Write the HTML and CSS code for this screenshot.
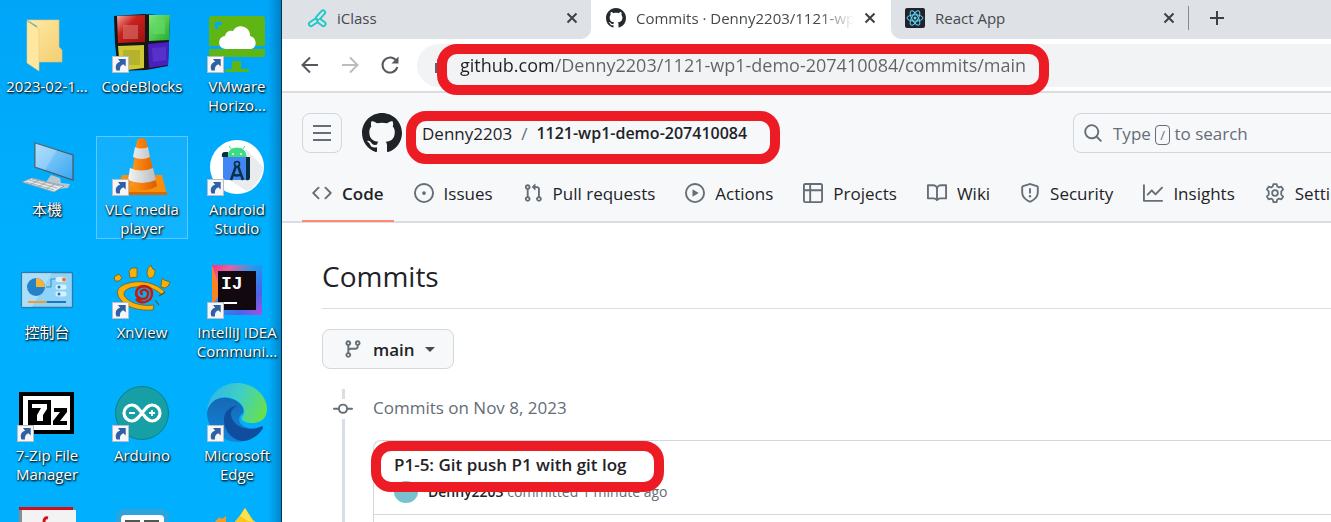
FILE: index.html
```html
<!DOCTYPE html>
<html lang="en">
<head>
<meta charset="utf-8">
<title>Commits · Denny2203/1121-wp1-demo-207410084</title>
<link rel="stylesheet" href="styles.css">
</head>
<body>
<svg width="0" height="0" class="defs" aria-hidden="true">
  <defs>
    <symbol id="badge" viewBox="0 0 17 17"><rect x=".5" y=".5" width="16" height="16" fill="#f5f6f8" stroke="#b9bcc2"/><path d="M4.5 14.500C2.500 9.500 5 6.500 8.200 5.800L6 3h7.700v7.500l-2.300-2.200C8.500 9.500 7.500 11.500 8 14.500z" fill="#2f5fa5"/></symbol>
    <symbol id="octocat" viewBox="0 0 16 16"><path d="M8 0c4.420 0 8 3.580 8 8a8.013 8.013 0 0 1-5.450 7.590c-.4.080-.55-.17-.55-.38 0-.27.010-1.130.010-2.200 0-.75-.25-1.230-.54-1.480 1.780-.2 3.650-.88 3.650-3.950 0-.88-.31-1.590-.82-2.150.080-.2.360-1.020-.080-2.120 0 0-.67-.22-2.200.82-.64-.18-1.320-.27-2-.27-.68 0-1.360.090-2 .27-1.530-1.030-2.200-.82-2.200-.82-.44 1.100-.16 1.920-.080 2.120-.51.560-.82 1.280-.82 2.150 0 3.060 1.860 3.750 3.640 3.950-.23.200-.44.550-.51 1.070-.46.210-1.610.550-2.330-.66-.15-.24-.6-.83-1.230-.82-.67.010-.27.380.010.530.340.190.730.900.820 1.130.160.450.680 1.310 2.690.940 0 .67.010 1.300.010 1.490 0 .21-.15.450-.55.380A7.995 7.995 0 0 1 0 8c0-4.420 3.580-8 8-8Z"/></symbol>
    <linearGradient id="gold" x1="0" y1="0" x2="1" y2="1"><stop offset="0" stop-color="#ffeaa5"/><stop offset="1" stop-color="#f3ce72"/></linearGradient>
    <linearGradient id="red" x1="0" y1="0" x2="1" y2="1"><stop offset="0" stop-color="#f4a8a2"/><stop offset=".4" stop-color="#c9211c"/><stop offset="1" stop-color="#9b1110"/></linearGradient>
    <linearGradient id="green" x1="0" y1="0" x2="1" y2="1"><stop offset="0" stop-color="#7fe77c"/><stop offset="1" stop-color="#25ab2a"/></linearGradient>
    <linearGradient id="cone" x1="0" x2="1"><stop offset="0" stop-color="#ff9a1f"/><stop offset=".5" stop-color="#f47a08"/><stop offset="1" stop-color="#d65c00"/></linearGradient>
    <linearGradient id="conew" x1="0" x2="1"><stop offset="0" stop-color="#f4f4f4"/><stop offset="1" stop-color="#b8bcc0"/></linearGradient>
    <linearGradient id="screen" x1="0" y1="0" x2="1" y2="1"><stop offset="0" stop-color="#9fd8fb"/><stop offset="1" stop-color="#3aa6f2"/></linearGradient>
    <linearGradient id="ij" x1="0" y1="0" x2="1" y2="1"><stop offset="0" stop-color="#fe2d7d"/><stop offset=".2" stop-color="#e8609c"/><stop offset=".45" stop-color="#1f9cf0"/><stop offset=".75" stop-color="#4b64e8"/><stop offset="1" stop-color="#b04ce0"/></linearGradient>
    <linearGradient id="edgetop" x1="0" x2="1" y1=".3" y2=".6"><stop offset="0" stop-color="#31b5ea"/><stop offset=".5" stop-color="#3fcfc4"/><stop offset="1" stop-color="#67e04e"/></linearGradient>
    <linearGradient id="edgemid" x1="0" y1="0" x2="0" y2="1"><stop offset="0" stop-color="#1668b4"/><stop offset="1" stop-color="#1186dc"/></linearGradient>
  </defs>
</svg>

<main class="screen">
<nav class="desktop" aria-label="Desktop">
  <button class="shortcut"><svg viewBox="0 0 58 58"><path d="M9 6h32v27l3 3v12H19V12z" fill="url(#gold)" stroke="#e6c46b" stroke-width=".6"/><path d="M9 7l12 8v42L9 49z" fill="#ffe7a0" stroke="#e9cb7a" stroke-width=".6"/></svg><span>2023-02-1...</span></button>
  <button class="shortcut"><svg viewBox="0 0 58 58"><path d="M1 2l30-2 26 2-2 50-22 4L5 57 2 30z" fill="#161616"/><path d="M4 2l28-1v27L5 29z" fill="url(#red)"/><path d="M10 11h15v14H10z" fill="#d97b76" opacity=".55"/><path d="M36 1h21l-1 25-20 1z" fill="url(#green)"/><path d="M40 6h12v14H40z" fill="#63dd62" opacity=".6"/><path d="M5 32l26-1v23L7 57z" fill="#cdc934"/><path d="M10 36h17v15H10z" fill="#a7a428" opacity=".6"/><path d="M35 30l21-2-1 23-19 3z" fill="#4a1fc0"/><path d="M39 34l14-1v13l-13 2z" fill="#6040cf" opacity=".6"/><use href="#badge" x="-1" y="42" width="17" height="17"/></svg><span>CodeBlocks</span></button>
  <button class="shortcut"><svg viewBox="0 0 58 58"><path d="M4 2h50q3 0 3 3v27H1V5q0-3 3-3z" fill="#5fb513"/><path d="M1 35h56v5q0 3-3 3H4q-3 0-3-3zM24 47h9v8h-9zM19 55h20q2 0 2 3H17q0-3 2-3z" fill="#5fb513"/><path d="M7 15V8h7v3h-4v4z" fill="#00a9fb"/><path d="M18 35c-9 0-9-12-1-13 1-5 5-6 8-5 5-9 18-4 17 5 8 2 7 13 0 13z" fill="#fff"/><use href="#badge" x="-1" y="42" width="17" height="17"/></svg><span>VMware Horizo...</span></button>

  <button class="shortcut"><svg viewBox="0 0 58 58"><path d="M33 38l9 3 1 5 9 1-2 4-11 1-13-4z" fill="#b8c7d0"/><path d="M17 6l38 12v25L17 30z" fill="url(#screen)" stroke="#4d5b66" stroke-width="1.300"/><path d="M17 6l22 7-12 20-10-3z" fill="#fff" opacity=".2"/><path d="M4 45l10-4 32 8-10 6z" fill="#e4e9ec" stroke="#8c989f" stroke-width=".8"/><path d="M8 45l28 8M11 43l28 8M14 42l28 7M12 48l9-5M20 50l9-5M28 52l9-5" stroke="#8c989f" stroke-width=".7"/></svg><span lang="zh-Hant">本機</span></button>
  <button class="shortcut selected"><svg viewBox="0 0 58 58"><path d="M9 38h40l5 20H1z" fill="#f98e0c"/><path d="M1 55h53v3H1z" fill="#d66a00"/><path d="M24 3q5-4 9 0l11 46q-13 8-27 0z" fill="url(#cone)"/><path d="M22 10q6 3 13 0l2 10q-8 4-17 0zM17 31q11 5 23 0l3 12q-14 6-28 0z" fill="url(#conew)"/><use href="#badge" x="-1" y="42" width="17" height="17"/></svg><span>VLC media player</span></button>
  <button class="shortcut"><svg viewBox="0 0 58 58"><circle cx="29" cy="30" r="27" fill="#fff"/><path d="M38 12l17 18q-2 16-16 24L21 43z" fill="#e9ebee"/><path d="M20 20q0-9 9-9t9 9zM21 9l3 4M37 9l-3 4" fill="#3ddc84" stroke="#3ddc84"/><circle cx="25" cy="17" r="1" fill="#fff"/><circle cx="33" cy="17" r="1" fill="#fff"/><path d="M20 15h-3q-4 0-3 5h6zM38 20h4v21q0 3-4 2z" fill="#073042"/><path d="M15 20h23v23H18q-3 0-3-3z" fill="#4285f4"/><circle cx="29" cy="27" r="2.500" fill="none" stroke="#073042" stroke-width="1.600"/><path d="M28 29l-5 14M30 29l5 14M24 37q5 3 10 0" fill="none" stroke="#073042" stroke-width="2.500"/><use href="#badge" x="-1" y="42" width="17" height="17"/></svg><span>Android Studio</span></button>

  <button class="shortcut"><svg viewBox="0 0 58 58"><rect x="3.500" y="12.500" width="51" height="35" rx="1" fill="#8fd3f8" stroke="#2b7ba8" stroke-width="1.300"/><path d="M4 13h30L14 47H4z" fill="#c5eafc" opacity=".5"/><circle cx="18" cy="27" r="9" fill="#2582c8"/><path d="M18 27v-9a9 9 0 0 1 9 9z" fill="#f9b233"/><path d="M28 27h5v-8h7M10 42h19" fill="none" stroke="#3a8abb"/><path d="M10 42h18" stroke="#f39a2c" stroke-width="2"/><path d="M29 42h19" stroke="#1c78bb" stroke-width="2"/><path d="M40 19.500h6M40 27h6M40 34h6" stroke="#d8f1fd" stroke-width="5" stroke-linecap="round"/><circle cx="46" cy="19.500" r="2" fill="#ef7622"/><circle cx="41" cy="27" r="1.500" fill="#1c78bb"/><circle cx="41" cy="34" r="1.500" fill="#1c78bb"/></svg><span lang="zh-Hant">控制台</span></button>
  <button class="shortcut"><svg viewBox="0 0 58 58"><g fill="#f9ae08" stroke="#6d540d" stroke-width=".7"><path d="M1 17l5-3 3 4-3 3-4 0zM16 11l3-3h5v9l-7 1zM34 13q0-5 4-8 1 5 4 5 0 7-4 8-3 1-4-5zM49 18l2 2 6 2q-1 5-5 6l-4-1z"/><path d="M52 32C42 22 27 20 16 23 4 26 2 32 7 39c6 8 17 12 33 11l1-5C28 47 14 42 11 35c-1-6 8-9 18-8 9 0 15 3 20 8z"/><path d="M42 40l4 5M46 36l6-4" stroke-width="1.200"/></g><path d="M30 34q-3 0-2-3 4-3 7 1 1 7-6 7-8-2-5-9c4-6 14-5 15 3 0 9-10 12-16 6" fill="none" stroke="#c41c08" stroke-width="2.600"/><use href="#badge" x="-1" y="42" width="17" height="17"/></svg><span>XnView</span></button>
  <button class="shortcut"><svg viewBox="0 0 58 58"><path d="M4 5h50v50H4z" fill="url(#ij)"/><path d="M4 5l6 18v14L4 45z" fill="#fd8224"/><path d="M10 11h38v39H10z" fill="#120910"/><text x="13" y="29" class="glyph-ij">IJ</text><path d="M15 42h14v2H15z" fill="#fff"/><use href="#badge" x="-1" y="42" width="17" height="17"/></svg><span>IntelliJ IDEA Communi...</span></button>

  <button class="shortcut"><svg viewBox="0 0 58 58"><path d="M1 9h55v42H1z" fill="#000"/><path d="M5 13h47v34H5z" fill="#fff"/><path d="M10 17h23v25H10zM36 25h13v4l-7 9h7v4H35v-4l7-9h-6z" fill="#000"/><path d="M14 21h15v5l-4 6v6h-6v-6l4-7h-9z" fill="#fff"/><use href="#badge" x="-1" y="42" width="17" height="17"/></svg><span>7-Zip File Manager</span></button>
  <button class="shortcut"><svg viewBox="0 0 58 58"><circle cx="29" cy="30" r="26.500" fill="#16a0a5" stroke="#0b7f8a"/><path d="M29 30c-4-5-6-8-10-8a8 8 0 0 0 0 16c4 0 6-3 10-8s6-8 10-8a8 8 0 0 1 0 16c-4 0-6-3-10-8z" fill="none" stroke="#fff" stroke-width="3.200"/><path d="M16 30h6M36 30h6M39 27v6" stroke="#fff" stroke-width="1.800"/><use href="#badge" x="-1" y="42" width="17" height="17"/></svg><span>Arduino</span></button>
  <button class="shortcut"><svg viewBox="0 0 58 58"><path d="M-1 30C-1 18 13 12 24 16c9 3 13 10 11 14-9 6-2 18 17 15C44 57 34 61 22 58 8 54-1 43-1 30z" fill="url(#edgemid)"/><path d="M30 23c-9 0-15 7-14 16 1 10 9 18 18 19 9 0 17-6 21-13 0-2-1-2-3-1-15 6-29-3-29-13 0-4 3-7 7-8z" fill="#104d9e"/><path d="M-1 29C0 12 13 0 29 0c17 0 30 13 30 26 0 10-7 14-15 14-7 0-13-3-9-7 4-7-2-15-12-18C11 11 1 19-1 29z" fill="url(#edgetop)"/><use href="#badge" x="-1" y="42" width="17" height="17"/></svg><span>Microsoft Edge</span></button>

  <button class="shortcut" aria-label="PDF"><svg viewBox="0 0 58 58"><path d="M1 2h54l3 4v52H1z" fill="#8c8c90"/><path d="M4 4h54v54H4z" fill="#f3f3f3"/><path d="M1 1h54v3H1z" fill="#d60d16"/><path d="M30 12q-4-1-4 4v8" fill="none" stroke="#d60d16" stroke-width="3"/></svg></button>
  <button class="shortcut" aria-label="Calculator"><svg viewBox="0 0 58 58"><rect x="3" y="3" width="53" height="55" rx="8" fill="#2ea3dc"/><rect x="8" y="9" width="43" height="49" rx="4" fill="#fff"/><path d="M12 14h15v12H12zM31 14h15v12H31z" fill="#555"/></svg></button>
  <button class="shortcut" aria-label="Flame"><svg viewBox="0 0 58 58"><path d="M4 24q0-7 8-13 1 4 6-1v48H4z" fill="#f79a21"/><path d="M20 22Q30 14 37 2l8 12q8 4 6 20H20z" fill="#fbc91d"/><path d="M32 10l5-8 8 14-5-1z" fill="#fde34b"/></svg></button>
</nav>

<section class="browser">
  <header class="tabstrip">
    <div class="tab tab-first"><svg class="favicon" viewBox="0 0 20 20"><g fill="none" stroke-linecap="round"><path d="M11 10l5-5.500M8.500 13L4 16M12.500 13l4 3" stroke="#1bc8c8" stroke-width="6"/><path d="M11 10l5-5.500M8.500 13L4 16M12.500 13l4 3" stroke="#dee1e6" stroke-width="2.400"/></g><circle cx="10.500" cy="11.800" r="1.300" fill="#1bc8c8"/></svg><span class="tab-title">iClass</span><button class="close" aria-label="Close iClass"><svg viewBox="0 0 12 12"><path d="M1.500 1.500l9 9M10.500 1.500l-9 9"/></svg></button></div>
    <div class="tab tab-active"><svg class="favicon" fill="#24292f"><use href="#octocat"/></svg><span class="tab-title fade">Commits · Denny2203/1121-wp1-demo</span><button class="close" aria-label="Close Commits"><svg viewBox="0 0 12 12"><path d="M1.500 1.500l9 9M10.500 1.500l-9 9"/></svg></button></div>
    <div class="tab-rest">
      <div class="tab tab-react"><svg class="favicon" viewBox="0 0 20 20"><rect width="20" height="20" rx="2" fill="#20232a"/><g fill="none" stroke="#61dafb"><ellipse cx="10" cy="10" rx="8" ry="3.200"/><ellipse cx="10" cy="10" rx="8" ry="3.200" transform="rotate(60 10 10)"/><ellipse cx="10" cy="10" rx="8" ry="3.200" transform="rotate(120 10 10)"/></g><circle cx="10" cy="10" r="1.500" fill="#61dafb"/></svg><span class="tab-title">React App</span><button class="close" aria-label="Close React App"><svg viewBox="0 0 12 12"><path d="M1.500 1.500l9 9M10.500 1.500l-9 9"/></svg></button></div>
      <button class="newtab" aria-label="New tab"><svg viewBox="0 0 16 16"><path d="M8 1v14M1 8h14"/></svg></button>
    </div>
  </header>

  <div class="toolbar">
    <button class="nav" aria-label="Back"><svg viewBox="0 0 20 20"><path d="M18 10H3M10 2.500L2.500 10l7.500 7.500"/></svg></button>
    <button class="nav nav-off" aria-label="Forward" disabled><svg viewBox="0 0 20 20"><path d="M2 10h15M10 2.500l7.500 7.500-7.500 7.500"/></svg></button>
    <button class="nav" aria-label="Reload"><svg viewBox="0 0 20 20"><path d="M16.500 6.200A7.500 7.500 0 1 0 17.300 12"/><path d="M18.500 1.500v7h-7z" fill="#54585d" stroke="none"/></svg></button>
    <div class="omnibox">
      <svg class="lock" viewBox="0 0 14 18"><path d="M1 7h12v10H1z" fill="#5f6368"/><path d="M4 7V4q3-4 6 0v3" fill="none" stroke="#5f6368" stroke-width="2"/></svg>
      <label class="mark mark-url"><input class="url" type="text" aria-label="Address" value="github.com/Denny2203/1121-wp1-demo-207410084/commits/main"></label>
    </div>
  </div>

  <div class="gh-header">
    <div class="gh-top">
      <button class="menu" aria-label="Open menu"><svg viewBox="0 0 20 20"><path d="M1 3h18M1 10h18M1 17h18"/></svg></button>
      <a class="logo" href="#" aria-label="Homepage"><svg><use href="#octocat"/></svg></a>
      <div class="crumb mark mark-crumb"><a href="#">Denny2203</a><span class="slash">/</span><a class="repo" href="#">1121-wp1-demo-207410084</a></div>
      <button class="search"><svg class="icon" viewBox="0 0 16 16"><path d="M10.680 11.740a6 6 0 0 1-7.922-8.982 6 6 0 0 1 8.982 7.922l3.040 3.040a.749.749 0 0 1-1.060 1.060ZM11.500 7a4.499 4.499 0 1 0-8.997 0A4.499 4.499 0 0 0 11.500 7Z"/></svg><span class="hint">Type <kbd>/</kbd> to search</span></button>
    </div>
    <nav class="gh-tabs" aria-label="Repository">
      <a class="current" href="#"><svg class="icon" viewBox="0 0 16 16"><path d="m11.280 3.220 4.250 4.250a.75.75 0 0 1 0 1.060l-4.250 4.250a.749.749 0 0 1-1.060-1.060L13.940 8l-3.720-3.720a.749.749 0 0 1 1.060-1.060Zm-6.560 0a.749.749 0 0 1 1.060 1.060L2.060 8l3.720 3.720a.749.749 0 0 1-1.060 1.060L.47 8.530a.75.75 0 0 1 0-1.060Z"/></svg>Code</a>
      <a href="#"><svg class="icon" viewBox="0 0 16 16"><path d="M8 9.500a1.500 1.500 0 1 0 0-3 1.500 1.500 0 0 0 0 3Z"/><path d="M8 0a8 8 0 1 1 0 16A8 8 0 0 1 8 0ZM1.500 8a6.500 6.500 0 1 0 13 0 6.500 6.500 0 0 0-13 0Z"/></svg>Issues</a>
      <a href="#"><svg class="icon" viewBox="0 0 16 16"><path d="M1.500 3.250a2.250 2.250 0 1 1 3 2.122v5.256a2.251 2.251 0 1 1-1.500 0V5.372A2.250 2.250 0 0 1 1.500 3.250Zm5.677-.177L9.573.677A.25.25 0 0 1 10 .854V2.500h1A2.500 2.500 0 0 1 13.500 5v5.628a2.251 2.251 0 1 1-1.500 0V5a1 1 0 0 0-1-1h-1v1.646a.25.25 0 0 1-.427.177L7.177 3.427a.25.25 0 0 1 0-.354ZM3.750 2.500a.75.75 0 1 0 0 1.500.75.75 0 0 0 0-1.500Zm0 9.500a.75.75 0 1 0 0 1.500.75.75 0 0 0 0-1.500Zm8.250.75a.75.75 0 1 0 1.500 0 .75.75 0 0 0-1.500 0Z"/></svg>Pull requests</a>
      <a href="#"><svg class="icon" viewBox="0 0 16 16"><path d="M8 0a8 8 0 1 1 0 16A8 8 0 0 1 8 0ZM1.500 8a6.500 6.500 0 1 0 13 0 6.500 6.500 0 0 0-13 0Zm4.879-2.773 4.264 2.559a.25.25 0 0 1 0 .428l-4.264 2.559A.25.25 0 0 1 6 10.559V5.442a.25.25 0 0 1 .379-.215Z"/></svg>Actions</a>
      <a href="#"><svg class="icon" viewBox="0 0 16 16"><path d="M0 1.750C0 .784.784 0 1.750 0h12.500C15.216 0 16 .784 16 1.750v12.500A1.750 1.750 0 0 1 14.250 16H1.750A1.750 1.750 0 0 1 0 14.250ZM6.500 6.500v8h7.750a.25.25 0 0 0 .25-.25V6.500Zm8-1.500V1.750a.25.25 0 0 0-.25-.25H6.500V5Zm-13 1.500v7.750c0 .138.112.250.250.250H5v-8ZM5 5V1.500H1.750a.25.25 0 0 0-.25.250V5Z"/></svg>Projects</a>
      <a href="#"><svg class="icon" viewBox="0 0 16 16"><path d="M0 1.750A.75.75 0 0 1 .75 1h4.253c1.227 0 2.317.590 3 1.501A3.743 3.743 0 0 1 11.006 1h4.245a.75.75 0 0 1 .75.750v10.500a.75.75 0 0 1-.75.750h-4.507a2.250 2.250 0 0 0-1.591.659l-.622.621a.75.75 0 0 1-1.060 0l-.622-.621A2.250 2.250 0 0 0 5.258 13H.75a.75.75 0 0 1-.75-.75Zm7.251 10.324.004-5.073-.002-2.253A2.250 2.250 0 0 0 5.003 2.500H1.500v9h3.757a3.750 3.750 0 0 1 1.994.574ZM8.755 4.750l-.004 7.322a3.752 3.752 0 0 1 1.992-.572H14.500v-9h-3.495a2.250 2.250 0 0 0-2.250 2.250Z"/></svg>Wiki</a>
      <a href="#"><svg class="icon" viewBox="0 0 16 16"><path d="M7.467.133a1.748 1.748 0 0 1 1.066 0l5.250 1.680A1.750 1.750 0 0 1 15 3.480V7c0 1.566-.32 3.182-1.303 4.682-.983 1.498-2.585 2.813-5.032 3.855a1.697 1.697 0 0 1-1.330 0c-2.447-1.042-4.049-2.357-5.032-3.855C1.320 10.182 1 8.566 1 7V3.480a1.750 1.750 0 0 1 1.217-1.667Zm.61 1.429a.25.25 0 0 0-.153 0l-5.250 1.680a.25.25 0 0 0-.174.238V7c0 1.358.275 2.666 1.057 3.860.784 1.194 2.121 2.340 4.366 3.297a.196.196 0 0 0 .154 0c2.245-.956 3.582-2.104 4.366-3.298C13.225 9.666 13.500 8.360 13.500 7V3.480a.251.251 0 0 0-.174-.237l-5.250-1.680ZM8.750 4.750v3a.75.75 0 0 1-1.500 0v-3a.75.75 0 0 1 1.500 0ZM9 10.500a1 1 0 1 1-2 0 1 1 0 0 1 2 0Z"/></svg>Security</a>
      <a href="#"><svg class="icon" viewBox="0 0 16 16"><path d="M1.500 1.750V13.500h13.750a.75.75 0 0 1 0 1.500H.75a.75.75 0 0 1-.75-.75V1.750a.75.75 0 0 1 1.500 0Zm14.280 2.530-5.250 5.250a.75.75 0 0 1-1.060 0L7 7.060 4.280 9.780a.751.751 0 0 1-1.060-1.060l3.250-3.250a.75.75 0 0 1 1.060 0L10 7.940l4.720-4.720a.751.751 0 0 1 1.060 1.060Z"/></svg>Insights</a>
      <a href="#"><svg class="icon" viewBox="0 0 16 16"><path d="M6.700.8h2.600l.5 2 1.300.7 2-.6 1.400 2.300-1.500 1.500v2.600l1.500 1.500-1.400 2.300-2-.6-1.300.7-.5 2H6.700l-.5-2-1.300-.7-2 .6-1.400-2.300L3 9.300V6.700L1.500 5.200l1.400-2.300 2 .6 1.300-.7z" fill="none" stroke="#656d76" stroke-width="1.400" stroke-linejoin="round"/><circle cx="8" cy="8" r="2.300" fill="none" stroke="#656d76" stroke-width="1.400"/></svg>Settings</a>
    </nav>
  </div>

  <div class="content">
    <h1>Commits</h1>
    <button class="branch"><svg class="icon" viewBox="0 0 16 16"><path d="M9.500 3.250a2.250 2.250 0 1 1 3 2.122V6A2.500 2.500 0 0 1 10 8.500H6a1 1 0 0 0-1 1v1.128a2.251 2.251 0 1 1-1.500 0V5.372a2.250 2.250 0 1 1 1.500 0v1.836A2.493 2.493 0 0 1 6 7h4a1 1 0 0 0 1-1v-.628A2.250 2.250 0 0 1 9.500 3.250Zm-6 0a.75.75 0 1 0 1.500 0 .75.75 0 0 0-1.500 0Zm8.250-.75a.75.75 0 1 0 0 1.500.75.75 0 0 0 0-1.500ZM4.250 12a.75.75 0 1 0 0 1.500.75.75 0 0 0 0-1.500Z"/></svg>main<i class="caret"></i></button>
    <div class="timeline">
      <div class="rail"><i class="stub"></i><svg class="icon" viewBox="0 0 16 16"><path d="M11.930 8.500a4.002 4.002 0 0 1-7.860 0H.75a.75.75 0 0 1 0-1.500h3.320a4.002 4.002 0 0 1 7.860 0h3.320a.75.75 0 0 1 0 1.500Zm-1.430-.75a2.500 2.500 0 1 0-5 0 2.500 2.500 0 0 0 5 0Z"/></svg><i class="line"></i></div>
      <div class="group">
        <h2>Commits on Nov 8, 2023</h2>
        <ol class="card">
          <li>
            <a class="subject mark mark-commit" href="#">P1-5: Git push P1 with git log</a>
            <p class="meta"><i class="avatar"></i><span><b>Denny2203</b> committed 1 minute ago</span></p>
          </li>
          <li></li>
        </ol>
      </div>
    </div>
  </div>
</section>
</main>
</body>
</html>
```
FILE: styles.css
```css
* { box-sizing: border-box; }
body { margin: 0; font-family: "Open Sans", "Noto Sans CJK TC", sans-serif; font-size: 17px; color: #1f2328; }
button { font: inherit; color: inherit; background: none; border: 0; padding: 0; }
a { color: inherit; text-decoration: none; }
.defs { position: absolute; }
.screen { display: flex; height: 100vh; overflow: hidden; }

/* Desktop */
.desktop {
  flex: none;
  display: grid;
  grid-template-columns: repeat(3, 92px);
  grid-auto-rows: 103px;
  gap: 20px 3px;
  align-content: start;
  padding: 13px 0 0 1px;
  width: 282px;
  overflow: hidden;
  background: linear-gradient(90deg, transparent 268px, #004a7a66 281px, #04304b 281px), linear-gradient(#00a5f8, #00b0ff 50%);
}
.shortcut { display: flex; flex-direction: column; align-items: center; gap: 5px; padding-top: 1px; color: #fff; font-size: 15px; line-height: 19px; text-shadow: 1px 1px 2px #000, 0 1px 2px #000a; }
.shortcut svg { flex: none; width: 58px; height: 58px; overflow: visible; }
.selected { background: #ffffff12; box-shadow: inset 0 0 0 1px #5cc8ff; }
.glyph-ij { font: bold 18px "Liberation Mono", monospace; fill: #fff; text-shadow: none; }

/* Browser frame */
.browser { flex: 1; min-width: 0; display: flex; flex-direction: column; overflow: hidden; background: #fff; }
.tabstrip { display: flex; flex: none; height: 39px; }
.tab { display: flex; align-items: center; gap: 10px; font-size: 15px; color: #45494d; padding-right: 13px; padding-bottom: 3px; }
.tab-first { flex: none; width: 309px; padding-left: 25px; background: #dee1e6; border-radius: 0 0 10px 0; }
.tab-active { flex: none; width: 300px; padding-left: 15px; padding-right: 15px; }
.tab-rest { flex: 1; min-width: 0; display: flex; align-items: center; background: #dee1e6; border-radius: 0 0 0 10px; padding: 0 0 3px 14px; }
.tab-react { flex: none; width: 284px; border-right: 1px solid #85898e; height: 24px; padding-bottom: 0; }
.favicon { flex: none; width: 20px; height: 20px; }
.tab-title { flex: 1; min-width: 0; white-space: nowrap; overflow: hidden; }
.fade { mask-image: linear-gradient(90deg, #000 84%, transparent); }
.close, .newtab { display: flex; }
.close svg { width: 12px; height: 12px; stroke: #3c4043; stroke-width: 2; }
.newtab { margin-left: 20px; }
.newtab svg { width: 16px; height: 16px; stroke: #3c4043; stroke-width: 2; }
.toolbar { flex: none; display: flex; align-items: center; gap: 20px; height: 54px; padding-left: 18px; border-bottom: 2px solid #dadce0; }
.nav { display: flex; flex: none; }
.nav svg { width: 20px; height: 20px; fill: none; stroke: #54585d; stroke-width: 2; }
.nav-off svg { stroke: #babcbe; }
.omnibox { flex: 1; min-width: 0; display: flex; align-items: center; gap: 12px; height: 43px; margin-left: -3px; padding-left: 17px; background: #f1f3f4; border-radius: 22px 0 0 22px; }
.lock { flex: none; width: 14px; height: 18px; }
.url {
  display: block; width: 100%; padding: 0; border: 0; outline: 0; font: inherit; font-size: 18px; line-height: 43px; height: 43px; color: #5f6368;
  background: linear-gradient(90deg, #202124 95px, #5f6368 95px) text; -webkit-text-fill-color: transparent;
}

/* Red highlight frames */
.mark { position: relative; }
.mark::after { content: ""; position: absolute; border: 10px solid #ed1c24; border-radius: 20px; pointer-events: none; }
.mark-url { width: 567px; }
.mark-url::after { inset: 0 -22px -8px -23px; }
.mark-crumb::after { inset: -2px -33px -11px -16px; }
.mark-commit::after { inset: -11px -37px -15px -23px; }

/* GitHub header */
.gh-header { flex: none; background: #f6f8fa; border-bottom: 2px solid #d8dee4; padding: 20px 0 0 20px; }
.gh-top { display: flex; gap: 20px; height: 40px; }
.menu { display: grid; place-items: center; flex: none; width: 40px; border: 1px solid #d0d7de; border-radius: 8px; }
.menu svg { width: 20px; height: 20px; stroke: #656d76; stroke-width: 2; }
.logo svg { display: block; width: 40px; height: 40px; fill: #1f2328; }
.crumb { display: flex; align-items: center; gap: 9px; white-space: nowrap; }
.slash { color: #656d76; }
.repo { font-weight: 600; font-size: 16px; }
.search { display: flex; align-items: center; gap: 10px; flex: none; width: 440px; margin-left: auto; margin-right: -182px; padding-left: 9px; border: 1px solid #d0d7de; border-radius: 8px; color: #656d76; }
kbd { display: inline-block; padding: 0 4px; border: 1px solid #656d76; border-radius: 4px; font: inherit; font-size: 13px; line-height: 18px; }
.icon { flex: none; width: 20px; height: 20px; fill: #656d76; }
.gh-tabs { display: flex; gap: 10px; margin-top: 10px; white-space: nowrap; }
.gh-tabs a { display: flex; align-items: center; gap: 10px; height: 59px; padding: 3px 10px 0; margin-bottom: -1px; border-bottom: 2px solid transparent; }
.gh-tabs .current { font-weight: 600; border-color: #fd8c73; }

/* Commit list */
.content { flex: 1; display: flex; flex-direction: column; min-height: 0; padding: 29px 0 0 40px; }
h1 { margin: 0 0 20px; padding-bottom: 8px; border-bottom: 1px solid #d8dee4; font-size: 28px; font-weight: 400; line-height: 48px; }
.branch { align-self: flex-start; display: flex; flex: none; align-items: center; gap: 10px; height: 40px; padding: 0 18px 0 20px; border: 1px solid #d5d8da; border-radius: 8px; background: #f6f8fa; font-weight: 600; }
.caret { border: 5px solid transparent; border-top-color: #424a53; border-bottom: 0; }
.timeline { flex: 1; display: flex; gap: 20px; min-height: 0; margin-top: 20px; padding-left: 11px; }
.rail { display: flex; flex-direction: column; align-items: center; width: 20px; }
.stub, .line { width: 3px; background: #d8dee4; }
.stub { height: 10px; }
.line { flex: 1; }
.group { flex: 1; min-width: 0; }
h2 { margin: 8px 0 22px; font-size: 17px; font-weight: 400; line-height: 21px; color: #656d76; }
.card { margin: 0; padding: 0; list-style: none; border: 1px solid #d0d7de; border-right: 0; border-radius: 8px 0 0 0; }
.card li { padding: 11px 20px; border-bottom: 1px solid #d0d7de; }
.subject { display: inline-block; font-weight: 600; line-height: 25px; }
.meta { display: flex; align-items: center; gap: 10px; margin: 4px 0 0; font-size: 14px; line-height: 22px; color: #656d76; }
.meta b { font-weight: 600; color: #1f2328; }
.avatar { width: 24px; height: 22px; border-radius: 50%; background: #79c1ce; }
```
